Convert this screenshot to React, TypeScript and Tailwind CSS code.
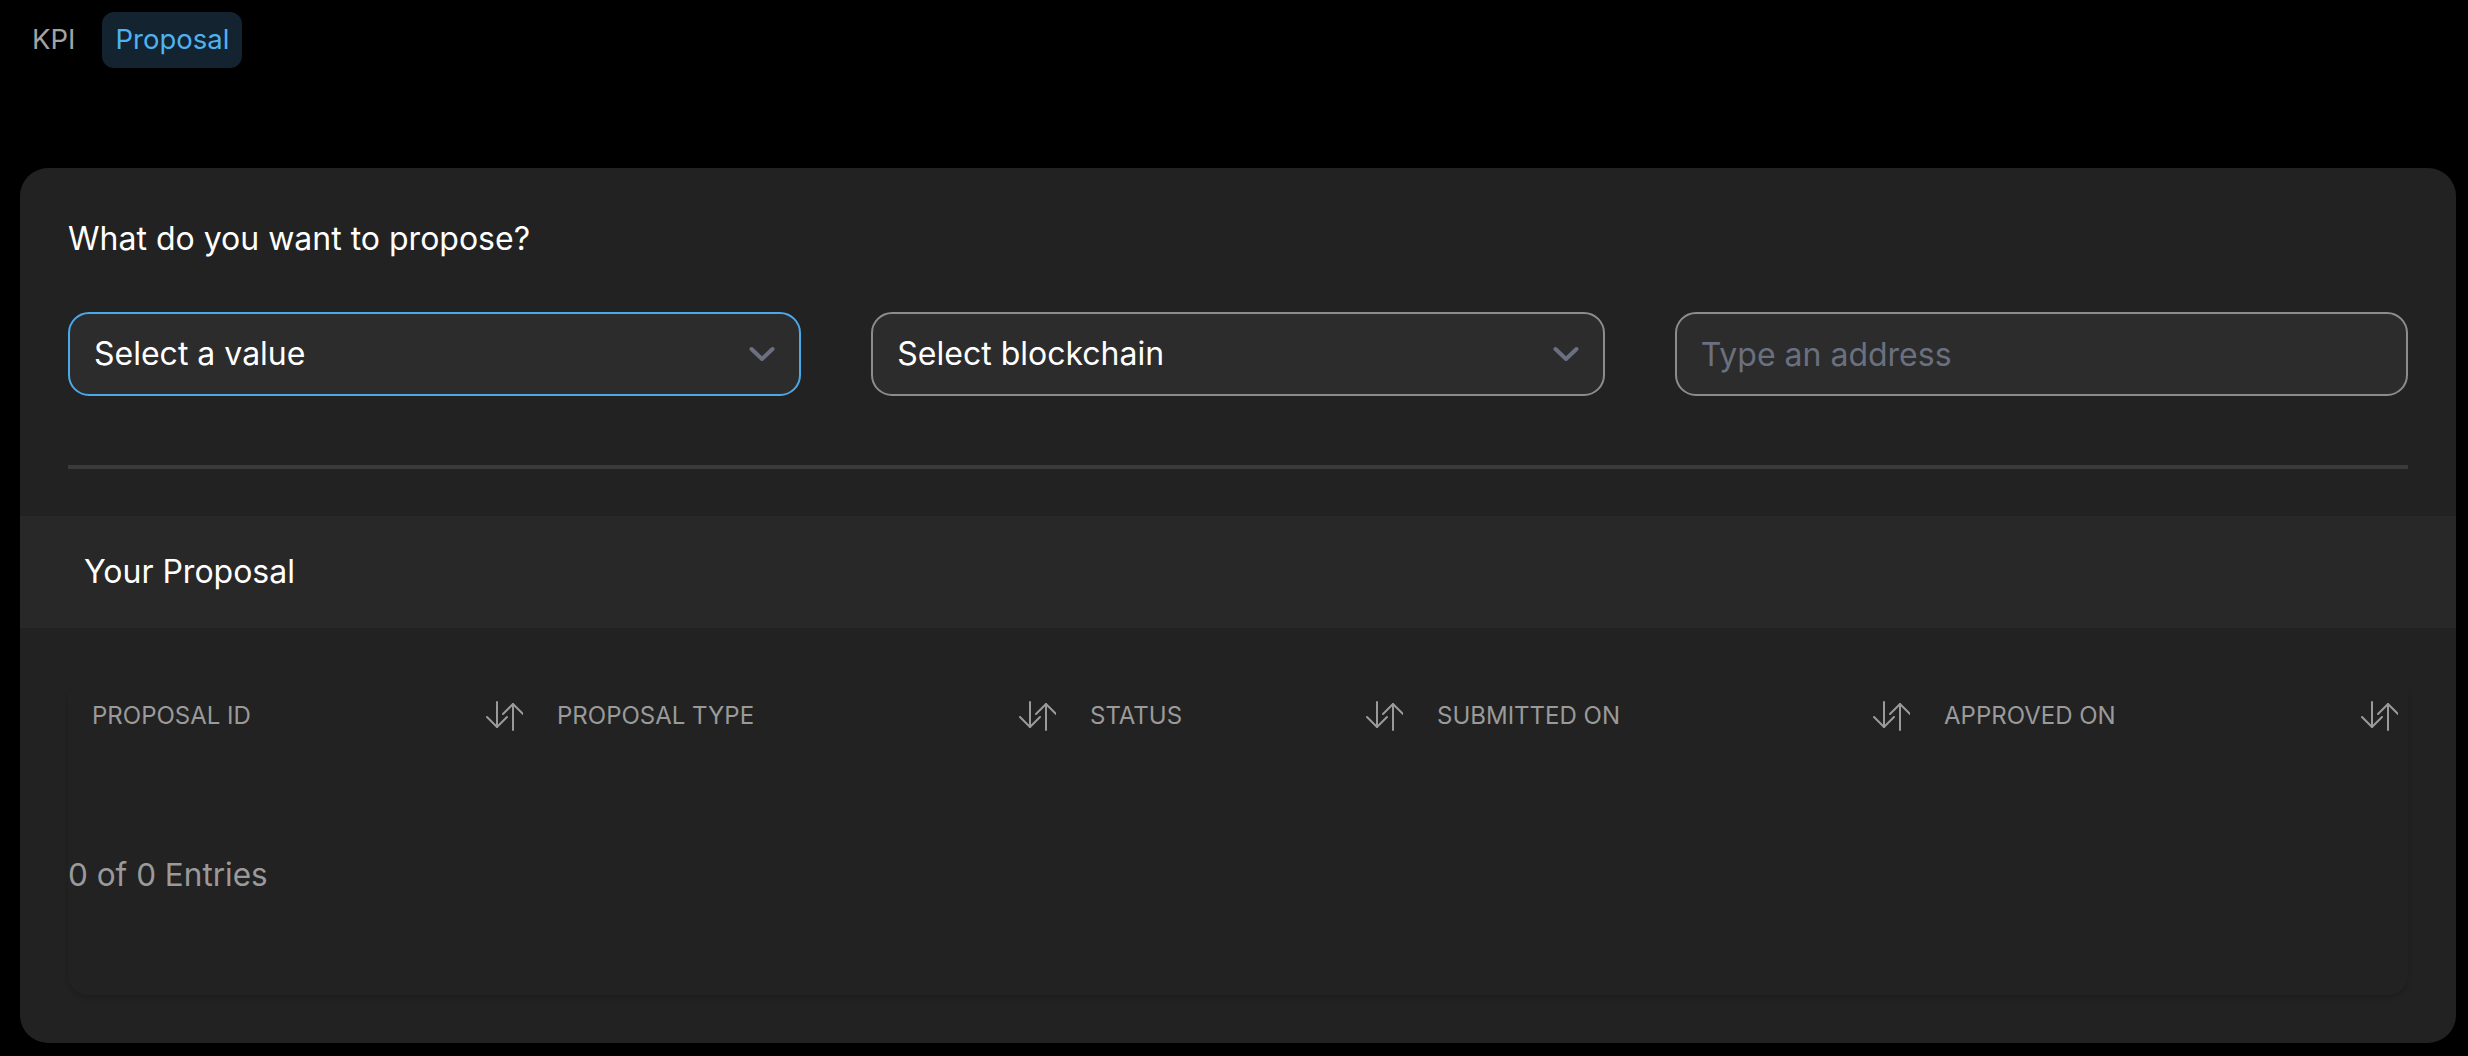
import { useState } from "react";

const columns = [
  { label: "Proposal ID" },
  { label: "Proposal Type" },
  { label: "Status" },
  { label: "Submitted On" },
  { label: "Approved On" },
];

function SortIcon() {
  return (
    <svg width="37" height="30" viewBox="0 0 37 30" fill="none" stroke="#9a9a9a" strokeWidth="2" strokeLinecap="round" strokeLinejoin="round">
      {/* down arrow */}
      <path d="M11 1v25" />
      <path d="M1 16l10 10 10-10" />
      {/* up arrow */}
      <path d="M27 3v26" />
      <path d="M17 13l10-10 10 10" />
    </svg>
  );
}

function Chevron() {
  return (
    <svg width="26" height="16" viewBox="0 0 26 16" fill="none" stroke="#6b7080" strokeWidth="4" strokeLinecap="round" strokeLinejoin="round">
      <path d="M2.5 3l10.5 10 10.5-10" />
    </svg>
  );
}

function SelectBox({ label, active }: { label: string; active?: boolean }) {
  return (
    <div
      className={
        active
          ? "flex h-[84px] items-center justify-between rounded-[21px] border-2 border-[#4aa9e9] bg-[#2c2c2c] pl-[24px] pr-[24px]"
          : "flex h-[84px] items-center justify-between rounded-[21px] border-2 border-[#8c8c8c] bg-[#2c2c2c] pl-[24px] pr-[24px]"
      }
    >
      <span className="text-[32px] text-white">{label}</span>
      <Chevron />
    </div>
  );
}

export default function App() {
  const [tab, setTab] = useState("Proposal");
  const [address, setAddress] = useState("");

  return (
    <div className="min-h-screen bg-black font-['Inter',sans-serif]">
      {/* Tabs */}
      <div className="flex gap-[14px] px-[19px] pt-[12px]">
        {["KPI", "Proposal"].map((t) => (
          <button
            key={t}
            onClick={() => setTab(t)}
            className={
              t === tab
                ? "flex h-[56px] items-center rounded-[12px] bg-[#13232f] px-[13px] text-[27.5px] text-[#4fb2ef]"
                : "flex h-[56px] items-center rounded-[12px] px-[13px] text-[27.5px] text-[#a3a3a3]"
            }
          >
            {t}
          </button>
        ))}
      </div>

      {/* Main card */}
      <div className="ml-[20px] mr-[12px] mt-[100px] rounded-[28px] bg-[#222222] pb-[48px] pt-[47px]">
        <div className="px-[48px]">
          <h2 className="text-[32px] leading-[47px] text-white">What do you want to propose?</h2>

          <div className="mt-[50px] grid grid-cols-3 gap-[70px]">
            <SelectBox label="Select a value" active />
            <SelectBox label="Select blockchain" />
            <input
              value={address}
              onChange={(e) => setAddress(e.target.value)}
              placeholder="Type an address"
              className="h-[84px] rounded-[21px] border-2 border-[#8c8c8c] bg-[#2c2c2c] px-[24px] text-[32px] text-white outline-none placeholder:text-[#6b7080]"
            />
          </div>

          <div className="mt-[69px] h-[4px] bg-[#3a3a3a]" />
        </div>

        {/* Your Proposal */}
        <div className="mt-[47px] flex h-[112px] items-center bg-[#282828] px-[64px]">
          <h3 className="text-[32px] text-white">Your Proposal</h3>
        </div>

        <div className="px-[48px]">
          <div className="mt-[64px] rounded-b-[20px] bg-[#222222] pb-[97px] shadow-[0_3px_5px_rgba(0,0,0,0.15)]">
            <div className="grid h-[48px] grid-cols-[465fr_533fr_347fr_507fr_488fr]">
              {columns.map((c) => (
                <div key={c.label} className="flex items-center justify-between pl-[24px] pr-[10px]">
                  <span className="text-[24px] uppercase text-[#9a9a9a]">{c.label}</span>
                  <SortIcon />
                </div>
              ))}
            </div>
            <div className="mt-[111px] text-[31.5px] leading-[47px] text-[#9a9a9a]">0 of 0 Entries</div>
          </div>
        </div>
      </div>
    </div>
  );
}
